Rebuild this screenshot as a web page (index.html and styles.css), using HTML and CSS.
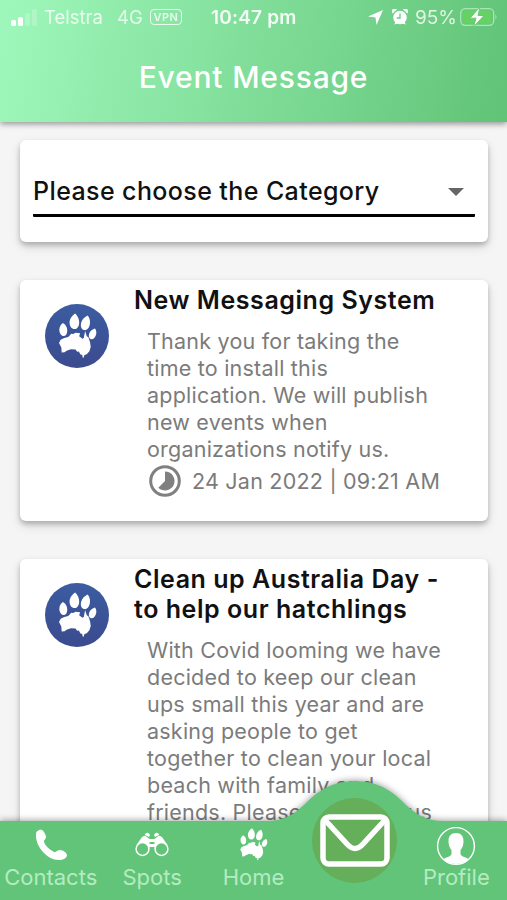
FILE: index.html
```html
<!DOCTYPE html>
<html lang="en">
<head>
<meta charset="utf-8">
<title>Event Message</title>
<link rel="stylesheet" href="styles.css">
</head>
<body>

<svg class="defs">
  <symbol id="paw" viewBox="42 28 115 138">
    <path d="M54 58c7 4 13 12 13 23 0 10-5 16-11 16-7 0-13-8-13-19 0-9 5-15 11-20z"/>
    <path d="M91 29c8 8 12 17 12 27 0 12-6 20-14 20-9 0-15-9-15-20 0-12 8-21 17-27z"/>
    <path d="M129 35c7 9 8 20 6 29-3 11-10 17-17 15-8-2-12-10-9-22 3-11 11-18 20-22z"/>
    <path d="M151 74c5 7 5 15 2 22-4 9-10 12-16 10-5-3-6-10-3-18 3-7 9-12 17-14z"/>
    <path d="M47 108l11-5 12-3 9-10 6 1 7-4 14 2-3 9 10 7 4-2 4-21 5 16 5 3 5 15 2 14-4 13-8 9-9 3-10-2-5-9-5 1-5-7-14-1-13 5-6 4-9 1-1-15-7-14z"/>
    <path d="M112 154l7 0-2 8-3 1z"/>
  </symbol>
</svg>

<header>
  <div class="status">
    <svg class="signal" width="26" height="17" viewBox="0 0 26 17">
      <rect x="0" y="11" width="5" height="6" rx="1.5"/>
      <rect x="7" y="8" width="5" height="9" rx="1.5"/>
      <rect class="weak" x="14" y="4" width="5" height="13" rx="1.5"/>
      <rect class="weak" x="21" y="0" width="5" height="17" rx="1.5"/>
    </svg>
    <span class="carrier">Telstra</span>
    <span class="network">4G</span>
    <span class="vpn">VPN</span>
    <span class="clock">10:47 pm</span>
    <svg class="arrow" width="15" height="15" viewBox="0 0 15 15"><path d="M15 0L8.500 15 7.500 7.500 0 6.500z"/></svg>
    <svg class="alarm" width="16" height="16" viewBox="0 0 16 16">
      <circle cx="8" cy="8.500" r="6.800"/>
      <path d="M.5 4.500A3 3 0 0 1 5 .5zM11 .5a3 3 0 0 1 4.500 4zM2 15.500l2-3 2 2zM14 15.500l-2-3-2 2z"/>
      <path class="hands" d="M8 4.500V9H4.800"/>
    </svg>
    <span class="percent">95%</span>
    <svg class="battery" width="38" height="20" viewBox="0 0 38 20">
      <rect class="case" x=".7" y="1.700" width="33" height="16.600" rx="4.500"/>
      <rect class="level" x="2.800" y="3.800" width="28.500" height="12.400" rx="2.500"/>
      <path class="tip" d="M35.500 7.500q2 2.500 0 5z"/>
      <path class="bolt" d="M20 0L10 11.200h6L13.500 20 24 8.500h-6z"/>
    </svg>
  </div>
  <h1>Event Message</h1>
</header>

<main>
  <section class="card picker">
    <div class="select">
      <span>Please choose the Category</span>
      <svg width="16" height="8" viewBox="0 0 16 8"><path d="M0 0h16L8 8z"/></svg>
    </div>
  </section>

  <article class="card">
    <div class="logo"><svg width="38" height="46"><use href="#paw"/></svg></div>
    <div class="content">
      <h2>New Messaging System</h2>
      <p>Thank you for taking the<br>time to install this<br>application. We will publish<br>new events when<br>organizations notify us.</p>
      <div class="date">
        <svg width="32" height="32" viewBox="0 0 32 32">
          <circle cx="16" cy="16" r="14.300"/>
          <path d="M16 6.500a9.500 9.500 0 1 1-6.700 16.200L16 16z"/>
        </svg>
        <span>24 Jan 2022 | 09:21 AM</span>
      </div>
    </div>
  </article>

  <article class="card">
    <div class="logo"><svg width="38" height="46"><use href="#paw"/></svg></div>
    <div class="content">
      <h2>Clean up Australia Day -<br>to help our hatchlings</h2>
      <p>With Covid looming we have<br>decided to keep our clean<br>ups small this year and are<br>asking people to get<br>together to clean your local<br>beach with family and<br>friends. Please message us</p>
    </div>
  </article>
</main>

<nav>
  <svg class="bump" width="507" height="120" viewBox="0 0 507 120">
    <path d="M0 41H266C284 41 293 35 304 25 319 9 334 1 355 1S391 9 406 25C417 35 426 41 444 41H507V120H0z"/>
  </svg>
  <a class="tab">
    <svg width="32" height="32" viewBox="0 0 32 32"><path d="M1 5C1 2 5 0 7 1c2 1 4 5 4 7 0 2-2 3-2 4 0 4 6 9 10 11 2 1 3-2 6-2 3 0 7 3 7 5 0 3-4 5-8 5C12 31 0 17 1 5z"/></svg>
    <span>Contacts</span>
  </a>
  <a class="tab">
    <svg width="34" height="32" viewBox="0 0 34 32">
      <path d="M10 6.500L14.500 10V20L1.500 16 7 8z"/>
      <path d="M24 6.500L19.500 10V20l13-4L27 8z"/>
      <path d="M14 10h6v3h-6zM14 15h6v3h-6zM10 5q3-3 5 1l-1 2-4-2zM24 5q-3-3-5 1l1 2 4-2z"/>
      <circle class="lens" cx="7.500" cy="20" r="6.400"/>
      <circle class="lens" cx="26.500" cy="20" r="6.400"/>
    </svg>
    <span>Spots</span>
  </a>
  <a class="tab">
    <svg width="28" height="33"><use href="#paw"/></svg>
    <span>Home</span>
  </a>
  <a class="tab active">
    <div class="bubble">
      <svg width="70" height="53" viewBox="0 0 70 53">
        <rect x="3" y="3" width="64" height="47" rx="6"/>
        <path d="M5 6L27 30q8 9 16 0L65 6"/>
      </svg>
    </div>
  </a>
  <a class="tab">
    <svg class="person" width="40" height="40" viewBox="0 0 40 40">
      <circle class="ring" cx="20" cy="20" r="18.400"/>
      <path d="M20 7c5 0 7.500 3 7.500 8 0 4-1 7-3 9v4c1 3 5 3 8 5-6 6.500-19 6.500-25 0 3-2 7-2 8-5v-4c-2-2-3-5-3-9 0-5 2.500-8 7.500-8z"/>
    </svg>
    <span>Profile</span>
  </a>
</nav>

</body>
</html>
```
FILE: styles.css
```css
*{
  box-sizing: border-box;
}
body{
  margin: 0;
  width: 507px;
  height: 900px;
  overflow: hidden;
  display: flex;
  flex-direction: column;
  background-color: #f5f5f5;
  font-family: Inter, "Liberation Sans", sans-serif;
  white-space: nowrap;
}
svg{
  display: block;
  flex: none;
  fill: white;
}
.defs{
  position: absolute;
  width: 0;
  height: 0;
}
header{
  flex: none;
  height: 122px;
  position: relative;
  color: white;
  background: linear-gradient(100deg, #9ef7ba 2%, #62c478 98%);
  box-shadow: 0 2px 6px rgba(0,0,0,0.4);
}
.status{
  display: flex;
  align-items: center;
  height: 34px;
  padding-left: 11px;
  font-size: 18.5px;
}
.signal .weak{
  opacity: 0.2;
}
.carrier{
  margin-left: 7px;
  width: 60px;
  opacity: 0.8;
}
.network{
  margin-left: 13px;
  width: 27px;
  opacity: 0.75;
}
.vpn{
  margin-left: 6px;
  width: 32px;
  height: 16px;
  border: 1.5px solid white;
  border-radius: 4px;
  font-size: 11px;
  font-weight: 600;
  line-height: 14px;
  letter-spacing: 0.5px;
  text-align: center;
  opacity: 0.8;
}
.clock{
  margin-left: 29px;
  width: 86px;
  font-size: 19px;
  font-weight: 600;
  letter-spacing: 0.2px;
  opacity: 0.9;
}
.arrow{
  margin-left: 71px;
}
.alarm{
  margin-left: 9px;
}
.hands{
  fill: none;
  stroke: #6bcd82;
  stroke-width: 1.3;
}
.percent{
  margin-left: 7px;
  width: 42px;
  font-size: 19px;
  opacity: 0.8;
}
.battery{
  margin-left: 3px;
}
.case{
  fill: none;
  stroke: #a9e6b4;
  stroke-width: 1.3;
}
.level{
  fill: #65d264;
}
.tip{
  fill: #a9e6b4;
}
.bolt{
  stroke: #65cc74;
  stroke-width: 1;
}
h1{
  margin: 25px 0 0;
  font-size: 30px;
  font-weight: 500;
  line-height: 36px;
  letter-spacing: 0.8px;
  text-align: center;
}
main{
  flex: 1;
  min-height: 0;
  padding: 18px 19px 0 20px;
  display: flex;
  flex-direction: column;
  gap: 38px;
}
.card{
  flex: none;
  display: flex;
  min-height: 241px;
  background-color: white;
  border-radius: 6px;
  box-shadow: 0 3px 5px rgba(0,0,0,0.22), 0 5px 12px rgba(0,0,0,0.12);
}
.picker{
  min-height: 0;
  height: 102px;
  padding: 33px 13px 25px;
}
.select{
  flex: 1;
  display: flex;
  justify-content: space-between;
  border-bottom: 3px solid black;
  border-radius: 1px;
  padding-right: 11px;
  font-size: 25px;
  font-weight: 500;
  line-height: 36px;
  letter-spacing: 0.4px;
  color: #111;
}
.select svg{
  margin-top: 15px;
  fill: #666;
}
.logo{
  flex: none;
  width: 64px;
  height: 64px;
  margin: 24px 26px 0 25px;
  padding: 9px 0 0 14px;
  border-radius: 50%;
  background: linear-gradient(#3c5ca1, #3b4b8e);
}
h2{
  margin: 5px 0 0 -1px;
  font-size: 25px;
  font-weight: 600;
  line-height: 30px;
  letter-spacing: 0.55px;
  color: #111;
}
p{
  margin: 13px 0 0 12px;
  font-size: 21.5px;
  line-height: 27px;
  letter-spacing: 0.22px;
  color: #7b7b7b;
}
.date{
  display: flex;
  align-items: center;
  gap: 11px;
  margin: 2px 0 0 14px;
  font-size: 21.5px;
  letter-spacing: 0.22px;
  color: #7b7b7b;
}
.date svg{
  fill: #808080;
}
.date circle{
  fill: none;
  stroke: #808080;
  stroke-width: 3;
}
nav{
  flex: none;
  position: relative;
  display: flex;
  height: 79px;
}
.bump{
  position: absolute;
  left: 0;
  bottom: 0;
  fill: #62c478;
  filter: drop-shadow(0 -1px 3px rgba(0,0,0,0.35));
}
.tab{
  position: relative;
  flex: 1 1 0;
  display: flex;
  flex-direction: column;
  align-items: center;
  justify-content: flex-end;
  padding-bottom: 10px;
  gap: 3px;
  font-size: 22px;
  line-height: 26px;
  color: #b4ecc1;
}
.lens{
  fill: #62c478;
  stroke: white;
  stroke-width: 1.5;
}
.person{
  margin-bottom: -5px;
}
.ring{
  fill: none;
  stroke: white;
  stroke-width: 1.4;
}
.bubble{
  flex: none;
  display: flex;
  align-items: center;
  justify-content: center;
  width: 85px;
  height: 85px;
  margin-bottom: 7px;
  border-radius: 50%;
  background-color: #65ae5a;
}
.bubble svg{
  fill: none;
  stroke: white;
  stroke-width: 5.5;
}
```
